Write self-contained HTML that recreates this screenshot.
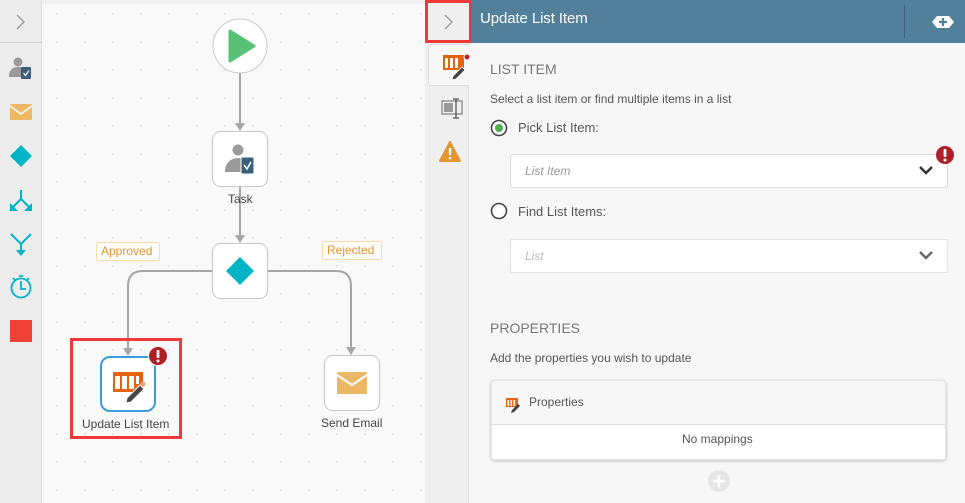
<!DOCTYPE html>
<html><head><meta charset="utf-8"><style>
*{margin:0;padding:0;box-sizing:border-box}
body{width:965px;height:503px;overflow:hidden;font-family:"Liberation Sans",sans-serif;background:#f9f9f9;position:relative}
.abs{position:absolute}
.t{position:absolute;white-space:nowrap}
</style></head><body>
<div class="abs" style="left:0;top:0;width:42px;height:503px;background:#ececec;border-right:1px solid #ddd"></div>
<div class="abs" style="left:0;top:42px;width:42px;height:1px;background:#d2d2d2"></div>
<svg class="abs" style="left:0;top:0" width="42" height="503">
<path d="M17 15 L24 22 L17 29" fill="none" stroke="#999" stroke-width="1.3"/>
<circle cx="18" cy="62" r="4.5" fill="#999"/><path d="M9 75 Q10 67 18 67 Q22 67 24 69 L24 77 L9 77Z" fill="#999"/>
<rect x="21" y="67" width="10" height="12" rx="1" fill="#3c5f7b"/><path d="M23.5 73 L25.5 75.5 L29 70.5" stroke="#fff" stroke-width="1.2" fill="none"/>
<rect x="10" y="104" width="22" height="16" rx="1" fill="#ebb865"/><path d="M10 106 L21 114 L32 106" stroke="#fff" stroke-width="1.5" fill="none"/>
<path d="M21 145 L32 156 L21 167 L10 156Z" fill="#00b4c8"/>
<path d="M21 190 V199 M21 199 L13 207 M21 199 L29 207" stroke="#00b4c8" stroke-width="2" fill="none"/>
<path d="M10 203 V211 H18Z M32 203 V211 H24Z" fill="#00b4c8"/>
<path d="M11 234 L21 244 L31 234 M21 244 V252" stroke="#00b4c8" stroke-width="2" fill="none"/>
<path d="M16 250 H26 L21 256Z" fill="#00b4c8"/>
<circle cx="21" cy="288" r="9.5" stroke="#00b4c8" stroke-width="1.8" fill="none"/>
<path d="M21 281 V289 H26 M13 278 L15 280 M29 278 L27 280 M19 276 H23" stroke="#00b4c8" stroke-width="1.8" fill="none"/>
<rect x="10" y="320" width="22" height="22" fill="#ef4135"/>
</svg>

<svg class="abs" style="left:43px;top:0" width="382" height="503">
<defs><pattern id="d" width="28" height="28" patternUnits="userSpaceOnUse" x="-15" y="-4"><circle cx="29" cy="18" r="0.8" fill="#cfcfcf"/><circle cx="1" cy="18" r="0.8" fill="#cfcfcf"/></pattern></defs>
<rect width="382" height="503" fill="url(#d)"/>
<rect width="382" height="4" fill="#eee" opacity=".7"/>
</svg>
<svg class="abs" style="left:0;top:0" width="425" height="503">
<g stroke="#a6a6a6" stroke-width="2" fill="none">
<path d="M240 73 V124"/><path d="M240 187 V236"/>
<path d="M212 271 H143 Q128 271 128 286 V350"/>
<path d="M268 271 H336 Q351 271 351 286 V348"/>
</g>
<g fill="#a6a6a6"><path d="M235 123 H245 L240 131Z"/><path d="M235 235 H245 L240 243Z"/><path d="M123 348 H133 L128 356Z"/><path d="M346 347 H356 L351 355Z"/></g>
<circle cx="240" cy="46" r="27" fill="#fff" stroke="#c8c8c8"/>
<path d="M230 31 L254 46 L230 61Z" fill="#57c274" stroke="#57c274" stroke-width="3" stroke-linejoin="round"/>
<rect x="212.5" y="131.5" width="55" height="55" rx="8" fill="#fff" stroke="#c8c8c8"/>
<circle cx="238" cy="150" r="5.5" fill="#9a9a9a"/><path d="M225 170 Q226 159 238 158 Q243 158 245 160 L245 172 L225 172Z" fill="#9a9a9a"/>
<rect x="241" y="157" width="13" height="17" rx="1.5" fill="#3c5f7b" stroke="#fff" stroke-width="1"/><path d="M244 165 L247 169 L251 162" stroke="#fff" stroke-width="1.5" fill="none"/>
<rect x="212.5" y="243.5" width="55" height="55" rx="8" fill="#fff" stroke="#c8c8c8"/>
<path d="M240 257 L254 271 L240 285 L226 271Z" fill="#00b4c8"/>
<rect x="96.5" y="242.5" width="63" height="18" rx="2" fill="#fff" stroke="#f9d9a8"/>
<rect x="322.5" y="241.5" width="59" height="18" rx="2" fill="#fff" stroke="#f9d9a8"/>
<rect x="101" y="357" width="54" height="54" rx="9" fill="#fff" stroke="#3a9ce0" stroke-width="2"/>
<rect x="113" y="372" width="30" height="20" fill="#e4640e"/>
<rect x="115" y="376" width="5" height="13" fill="#fff"/><rect x="122" y="376" width="5" height="13" fill="#fff"/><rect x="129" y="376" width="5" height="13" fill="#fff"/><rect x="136" y="376" width="3" height="8" fill="#fff"/>
<path d="M127 398 L140 385 L144 389 L131 402 L126 403Z" fill="#444" stroke="#fff" stroke-width="1"/>
<circle cx="143" cy="384" r="2.5" fill="#f0a070"/>
<circle cx="158" cy="356" r="9.5" fill="#b01e28" stroke="#fff" stroke-width="1"/>
<rect x="156.6" y="350" width="2.8" height="8" rx="1" fill="#fff"/><circle cx="158" cy="361" r="1.5" fill="#fff"/>
<rect x="71.5" y="339.5" width="109" height="98" fill="none" stroke="#ee3a3a" stroke-width="3"/>
<rect x="324.5" y="355.5" width="55" height="55" rx="8" fill="#fff" stroke="#c8c8c8"/>
<rect x="337" y="372" width="30" height="22" rx="1" fill="#ebb865"/><path d="M337 375 L352 385 L367 375" stroke="#fff" stroke-width="2" fill="none"/>
</svg>
<div class="t" style="left:228px;top:192px;font-size:12px;color:#444">Task</div>
<div class="t" style="left:101px;top:244px;font-size:12px;color:#e39530">Approved</div>
<div class="t" style="left:327px;top:243px;font-size:12px;color:#e39530">Rejected</div>
<div class="t" style="left:82px;top:417px;font-size:12px;color:#444">Update List Item</div>
<div class="t" style="left:321px;top:416px;font-size:12px;color:#444">Send Email</div>

<div class="abs" style="left:425px;top:0;width:540px;height:503px;background:#f7f7f7;border-left:1px solid #ddd"></div>
<div class="abs" style="left:425px;top:0;width:44px;height:503px;background:#efefef;border-right:1px solid #ddd"></div>
<div class="abs" style="left:428px;top:44px;width:41px;height:42px;background:#f7f7f7;border:1px solid #ddd;border-right:none;border-radius:3px 0 0 3px"></div>
<div class="abs" style="left:469px;top:0;width:496px;height:43px;background:#527f99"></div>
<div class="abs" style="left:904px;top:5px;width:1px;height:33px;background:#3e6379"></div>
<div class="t" style="left:480px;top:10px;font-size:15px;color:#fff;letter-spacing:-0.1px">Update List Item</div>
<svg class="abs" style="left:425px;top:0" width="540" height="503">
<rect x="1.5" y="1.5" width="44" height="40" fill="#efefef" stroke="#ee3a3a" stroke-width="3"/>
<path d="M20 15 L27 22 L20 29" fill="none" stroke="#999" stroke-width="1.3"/>
<path d="M512 16 H524 L529 22 L524 28 H512 L507 22Z" fill="#fff"/>
<path d="M518 18 V26 M514 22 H522" stroke="#527f99" stroke-width="2.2"/>
<rect x="18" y="55" width="21" height="15" fill="#e4640e"/>
<rect x="20" y="58" width="3" height="10" fill="#fff"/><rect x="25" y="58" width="3" height="10" fill="#fff"/><rect x="30" y="58" width="3" height="10" fill="#fff"/>
<path d="M28 76 L37 67 L40 70 L31 79 L27 80Z" fill="#444" stroke="#fff" stroke-width=".8"/>
<circle cx="42" cy="57" r="3" fill="#c0202b" stroke="#fff"/>
<rect x="17" y="101" width="20" height="13" fill="none" stroke="#888" stroke-width="1.3"/><rect x="19" y="103" width="9" height="9" fill="#999"/>
<path d="M31 99 V118 M28 99 H34 M28 118 H34" stroke="#555" stroke-width="1.3"/>
<path d="M25 142 L35 161 H15Z" fill="#e39530" stroke="#e39530" stroke-width="2" stroke-linejoin="round"/>
<rect x="23.8" y="148" width="2.4" height="7" fill="#fff"/><circle cx="25" cy="158" r="1.3" fill="#fff"/>
<circle cx="74" cy="128" r="7.5" fill="#fff" stroke="#444" stroke-width="1.6"/><circle cx="74" cy="128" r="4" fill="#4caf50"/>
<circle cx="74" cy="211" r="7.5" fill="#fff" stroke="#444" stroke-width="1.6"/>
</svg>
<div class="t" style="left:490px;top:61px;font-size:14px;color:#777">LIST ITEM</div>
<div class="t" style="left:490px;top:92px;font-size:12px;color:#555">Select a list item or find multiple items in a list</div>
<div class="t" style="left:518px;top:120px;font-size:13px;color:#555">Pick List Item:</div>
<div class="abs" style="left:510px;top:154px;width:438px;height:34px;background:#fff;border:1px solid #ddd;border-radius:2px"></div>
<div class="t" style="left:525px;top:164px;font-size:12px;color:#999;font-style:italic">List Item</div>
<div class="t" style="left:518px;top:204px;font-size:13px;color:#555">Find List Items:</div>
<div class="abs" style="left:510px;top:239px;width:438px;height:34px;background:#fff;border:1px solid #e3e3e3;border-radius:2px"></div>
<div class="t" style="left:525px;top:249px;font-size:12px;color:#bbb;font-style:italic">List</div>
<svg class="abs" style="left:0;top:0" width="965" height="503"><circle cx="945" cy="155" r="9" fill="#b01e28"/><rect x="943.6" y="149" width="2.8" height="8" rx="1" fill="#fff"/><circle cx="945" cy="160" r="1.5" fill="#fff"/>
<path d="M920 167 L926 173 L932 167" stroke="#333" stroke-width="2.4" fill="none"/><path d="M920 252 L926 258 L932 252" stroke="#666" stroke-width="2.4" fill="none"/></svg>
<div class="t" style="left:490px;top:320px;font-size:14px;color:#777">PROPERTIES</div>
<div class="t" style="left:490px;top:351px;font-size:12px;color:#555">Add the properties you wish to update</div>
<div class="abs" style="left:491px;top:380px;width:455px;height:80px;background:#f7f7f7;border:1px solid #e6e6e6;border-radius:4px;box-shadow:0 1px 3px rgba(0,0,0,.25)"></div>
<div class="abs" style="left:492px;top:424px;width:453px;height:35px;background:#fff;border-top:1px solid #ddd"></div>
<svg class="abs" style="left:425px;top:0" width="540" height="503">
<rect x="81" y="398" width="12" height="9" fill="#e4640e"/><rect x="82.5" y="400" width="1.6" height="6" fill="#fff"/><rect x="85.5" y="400" width="1.6" height="6" fill="#fff"/><rect x="88.5" y="400" width="1.6" height="6" fill="#fff"/>
<path d="M87 410 L93 404 L95 406 L89 412 L86 413Z" fill="#444"/>
</svg>
<div class="t" style="left:529px;top:395px;font-size:12px;color:#555">Properties</div>
<div class="t" style="left:682px;top:432px;font-size:12px;color:#555">No mappings</div>
<svg class="abs" style="left:0;top:0" width="965" height="503"><circle cx="719" cy="481" r="11" fill="#e6e6e6"/><path d="M719 475 V487 M713 481 H725" stroke="#fff" stroke-width="2.5"/></svg>
</body></html>
